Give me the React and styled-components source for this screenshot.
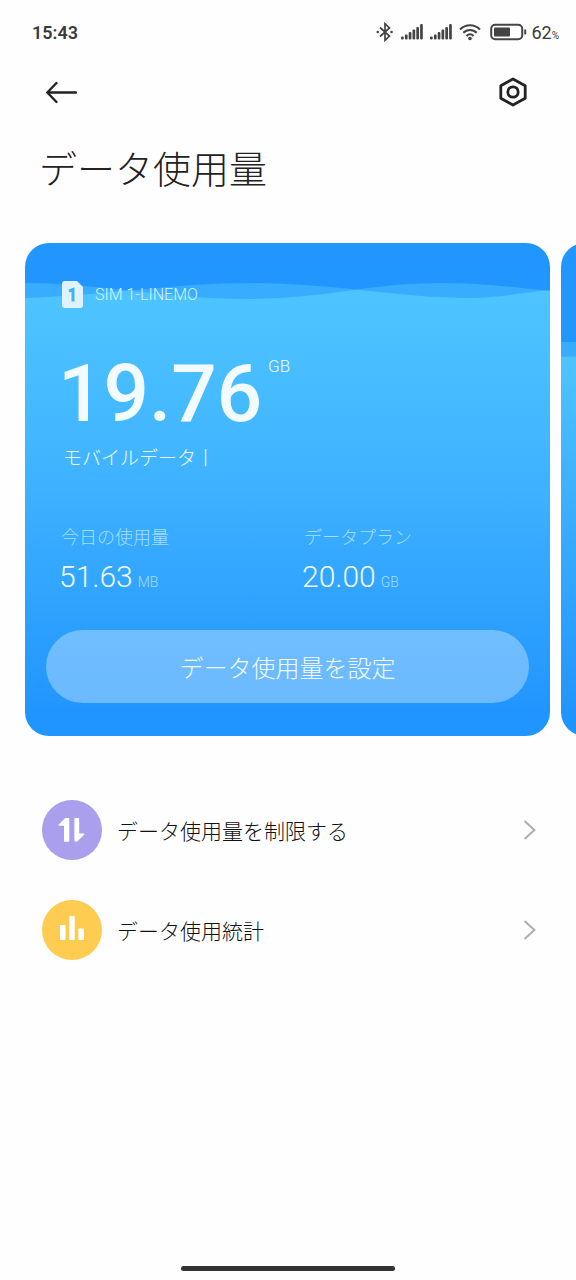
import styled, { createGlobalStyle } from "styled-components";

export default function App() {
    return (
        <>
            <GlobalStyle />
            <Screen>
                <StatusBar>
                    <Clock>15:43</Clock>
                    <StatusIcons>
                        <BluetoothIcon />
                        <SignalIcon />
                        <SignalIcon />
                        <WifiIcon />
                        <BatteryIcon />
                        <Battery>62<small>%</small></Battery>
                    </StatusIcons>
                </StatusBar>

                <TopBar>
                    <IconButton type="button" aria-label="戻る">
                        <svg width="32" height="24" viewBox="0 0 32 24" fill="none" stroke="#222" strokeWidth="2.4" strokeLinecap="round" strokeLinejoin="round">
                            <path d="M31 12.500H2.500M11.500 3L2.300 12.500l9.200 9.500" />
                        </svg>
                    </IconButton>
                    <IconButton type="button" aria-label="設定">
                        <svg width="28" height="30" viewBox="0 0 28 30" fill="none" stroke="#222" strokeWidth="2.800" strokeLinejoin="round">
                            <path d="M14 2l12.200 6.700v12.600L14 28 1.800 21.300V8.700z" />
                            <circle cx="14" cy="15" r="5.200" />
                        </svg>
                    </IconButton>
                </TopBar>

                <Title>データ使用量</Title>

                <Carousel>
                    <Card $level={56}>
                        <Waves id="wave-sim1" />
                        <CardBody>
                            <SimRow>
                                <SimIcon />
                                <span>SIM 1-LINEMO</span>
                            </SimRow>
                            <Total>
                                <strong>19.76</strong>
                                <span>GB</span>
                            </Total>
                            <TotalLabel>モバイルデータ丨</TotalLabel>
                            <Stats>
                                <Stat label="今日の使用量" value="51.63" unit="MB" />
                                <Stat label="データプラン" value="20.00" unit="GB" />
                            </Stats>
                            <PlanButton type="button">データ使用量を設定</PlanButton>
                        </CardBody>
                    </Card>
                    <Card $level={115}>
                        <Waves id="wave-sim2" $top={59} />
                    </Card>
                </Carousel>

                <Menu>
                    <MenuItem icon={<LimitIcon />} color="#a99fec" label="データ使用量を制限する" />
                    <MenuItem icon={<ChartIcon />} color="#ffcc52" label="データ使用統計" />
                </Menu>

                <HomeBar />
            </Screen>
        </>
    );
}

function Stat({ label, value, unit }) {
    return (
        <div>
            <StatLabel>{label}</StatLabel>
            <StatValue>{value}<small>{unit}</small></StatValue>
        </div>
    );
}

function MenuItem({ icon, color, label }) {
    return (
        <li>
            <MenuLink href="#">
                <Badge $color={color}>{icon}</Badge>
                <span>{label}</span>
                <svg width="14" height="22" viewBox="0 0 14 22" fill="none" stroke="#aaa" strokeWidth="1.8">
                    <path d="M1.500 2l10 9-10 9" />
                </svg>
            </MenuLink>
        </li>
    );
}

const BACK_WAVE = "M0 40C75 40 140 56 220 56S345 40 415 40C455 40 490 44 525 48V57H0z";
const FRONT_WAVE = "M0 55C70 53 150 40 228 40S375 55 445 55C475 55 500 49 525 47V57H0z";

// the water is brightest where the two waves overlap
function Waves({ id, $top = 0 }) {
    return (
        <WaveSvg $top={$top} viewBox="0 0 525 57" preserveAspectRatio="none" aria-hidden="true">
            <clipPath id={id}>
                <path d={FRONT_WAVE} />
            </clipPath>
            <path d={BACK_WAVE} fill="#38adff" />
            <path d={FRONT_WAVE} fill="#38adff" />
            <path d={BACK_WAVE} fill="#4dc4ff" clipPath={`url(#${id})`} />
        </WaveSvg>
    );
}

function BluetoothIcon() {
    return (
        <svg width="18" height="20" viewBox="0 0 18 20" fill="none" stroke="#444" strokeWidth="1.7">
            <path d="M4 5.500l9.500 8.500L9 18.300V1.700L13.500 6 4 14.500" />
            <circle cx="1.800" cy="10" r="1.300" fill="#444" stroke="none" />
            <circle cx="15.500" cy="10" r="1.300" fill="#444" stroke="none" />
        </svg>
    );
}

function SignalIcon() {
    return (
        <svg width="22" height="18" viewBox="0 0 22 18" fill="#444">
            <rect x="0" y="13.500" width="2.700" height="3" rx="1" />
            <rect x="3.900" y="11.500" width="2.700" height="5" rx="1" />
            <rect x="7.700" y="9" width="2.700" height="7.500" rx="1" />
            <rect x="11.500" y="6.500" width="2.700" height="10" rx="1" />
            <rect x="15.300" y="4" width="2.700" height="12.500" rx="1" />
            <rect x="19.100" y="1" width="2.700" height="15.500" rx="1" />
        </svg>
    );
}

function WifiIcon() {
    return (
        <svg width="24" height="18" viewBox="0 0 24 18" fill="none" stroke="#444" strokeWidth="2">
            <path d="M1 6.500C6.500 .8 15.500 .8 21 6.500M4.300 9.800c3.700-3.900 9.700-3.900 13.400 0M7.500 13c2-2.200 5-2.200 7 0" />
            <circle cx="11" cy="15.500" r="1.800" fill="#444" stroke="none" />
        </svg>
    );
}

function BatteryIcon() {
    return (
        <svg width="37" height="18" viewBox="0 0 37 18" fill="none">
            <rect x="1.200" y="1.700" width="31" height="14.600" rx="4" stroke="#444" strokeWidth="2" />
            <rect x="4" y="4.500" width="16" height="9" rx="1" fill="#444" />
            <path d="M35.200 6.500v5" stroke="#444" strokeWidth="2" />
        </svg>
    );
}

function SimIcon() {
    return (
        <svg width="21" height="27" viewBox="0 0 21 27">
            <path d="M3 0h12l6 6v18a3 3 0 0 1-3 3H3a3 3 0 0 1-3-3V3a3 3 0 0 1 3-3z" fill="#dff3ff" />
            <path d="M7 10.200l4-1.700v12" fill="none" stroke="#42b2f5" strokeWidth="3" />
        </svg>
    );
}

function LimitIcon() {
    return (
        <svg width="28" height="26" viewBox="0 0 28 26" fill="#fff" stroke="#fff" strokeWidth="1.600" strokeLinejoin="round">
            <path d="M1.300 8L7.500 1.800H10.500V24H6.800V8z" />
            <path d="M17.200 1.800h3.200v15.400h5.200L18.700 23.800h-1.500z" />
        </svg>
    );
}

function ChartIcon() {
    return (
        <svg width="26" height="28" viewBox="0 0 26 28" fill="#fff">
            <rect x="1" y="9" width="5.500" height="15" rx="1" />
            <rect x="10.200" y="0" width="5.500" height="24" rx="1" />
            <rect x="19.400" y="12.500" width="5.500" height="11.500" rx="1" />
        </svg>
    );
}

const GlobalStyle = createGlobalStyle`
* {
    box-sizing: border-box;
}
body {
    margin: 0;
    background: #fefefe;
    color: #222;
    font-family: Roboto, "Noto Sans CJK JP", sans-serif;
    font-weight: 300;
}
button {
    border: 0;
    padding: 0;
    background: none;
    font: inherit;
    color: inherit;
    cursor: pointer;
}
svg {
    display: block;
    flex-shrink: 0;
}
`

const Screen = styled.div`
    min-height: 100vh;
    display: flex;
    flex-direction: column;
    overflow: hidden;
`

const StatusBar = styled.div`
    display: flex;
    align-items: center;
    justify-content: space-between;
    height: 64px;
    padding: 0 17px 0 32px;
    color: #3a3a3a;
`

const Clock = styled.time`
    font-size: 18px;
    font-weight: 600;
`

const StatusIcons = styled.div`
    display: flex;
    align-items: center;
    gap: 7px;
`

const Battery = styled.span`
    font-size: 18px;
    font-weight: 400;
    margin-left: -3px;

    small {
        font-size: 10px;
    }
`

const TopBar = styled.header`
    display: flex;
    align-items: center;
    justify-content: space-between;
    height: 56px;
    padding: 0 49px 0 45px;
`

const IconButton = styled.button`
    display: flex;
`

const Title = styled.h1`
    margin: 18px 39px 41px;
    font-size: 38px;
    line-height: 64px;
    font-weight: 300;
`

const Carousel = styled.section`
    display: flex;
    gap: 11px;
    padding-left: 25px;
`

const Card = styled.article`
    flex: 0 0 calc(100% - 26px);
    display: grid;
    border-radius: 24px;
    overflow: hidden;
    color: #f2fbff;
    background: linear-gradient(
        #2196ff ${(p) => p.$level}px,
        #4dc4ff ${(p) => p.$level}px,
        #41b4ff 45%,
        #2094ff 97%
    );

    > * {
        grid-area: 1 / 1;
    }
`

const WaveSvg = styled.svg`
    width: 100%;
    height: 57px;
    margin-top: ${(p) => p.$top}px;
`

const CardBody = styled.div`
    display: flex;
    flex-direction: column;
    padding: 38px 21px 33px;
`

const SimRow = styled.div`
    display: flex;
    align-items: center;
    gap: 12px;
    padding-left: 16px;
    font-size: 16px;
    color: #d5f2ff;
`

const Total = styled.div`
    display: flex;
    align-items: flex-start;
    gap: 6px;
    margin-top: 42px;
    padding-left: 12px;

    strong {
        font-family: "Liberation Sans Narrow", Roboto, sans-serif;
        font-size: 80px;
        line-height: 88px;
        font-weight: 500;
    }

    span {
        font-size: 17px;
        line-height: 32px;
    }
`

const TotalLabel = styled.div`
    margin-top: 5px;
    padding-left: 17px;
    font-size: 19px;
    line-height: 32px;
`

const Stats = styled.div`
    display: grid;
    grid-template-columns: 1fr 1fr;
    gap: 16px;
    margin-top: 47px;
    padding-left: 13px;
`

const StatLabel = styled.div`
    padding-left: 2px;
    font-size: 18px;
    line-height: 32px;
    color: #a4deff;
`

const StatValue = styled.div`
    font-size: 30px;
    line-height: 46px;

    small {
        margin-left: 5px;
        font-size: 14px;
        color: #a4deff;
    }
`

const PlanButton = styled.button`
    height: 73px;
    margin-top: 25px;
    border-radius: 37px;
    background: rgba(255, 255, 255, 0.33);
    font-size: 24px;
`

const Menu = styled.ul`
    flex: 1;
    display: flex;
    flex-direction: column;
    gap: 40px;
    margin: 0;
    padding: 64px 39px 0 42px;
    list-style: none;
`

const MenuLink = styled.a`
    display: flex;
    align-items: center;
    gap: 15px;
    color: #111;
    font-size: 21px;
    text-decoration: none;

    span:nth-child(2) {
        flex: 1;
    }
`

const Badge = styled.span`
    display: flex;
    align-items: center;
    justify-content: center;
    width: 60px;
    height: 60px;
    border-radius: 50%;
    background: ${(p) => p.$color};
`

const HomeBar = styled.div`
    width: 37%;
    height: 5px;
    margin: 0 auto 9px;
    border-radius: 3px;
    background: #333;
`
